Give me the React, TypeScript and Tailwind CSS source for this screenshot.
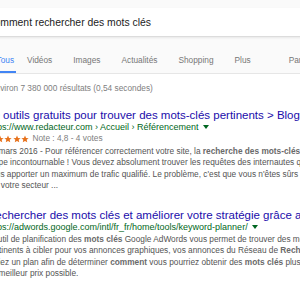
import React from 'react';

const tabs = ['Vidéos', 'Images', 'Actualités', 'Shopping', 'Plus'];

function Star() {
  return (
    <svg width="8" height="8" viewBox="0 0 24 24" className="shrink-0">
      <path
        d="M12 1.5l3.1 7.2 7.8.7-5.9 5.1 1.8 7.6L12 18l-6.8 4.1 1.8-7.6L1.1 9.4l7.8-.7z"
        fill="#e7711b"
      />
    </svg>
  );
}

function Arrow() {
  return (
    <span className="inline-block ml-[4px] mb-[1px] align-middle w-0 h-0 border-l-[3px] border-r-[3px] border-t-[4px] border-l-transparent border-r-transparent border-t-[#006621]" />
  );
}

export default function App() {
  return (
    <div className="w-[300px] h-[300px] overflow-hidden bg-white font-['Liberation_Sans',Arial,sans-serif]">
      <div className="-ml-[13px] w-[340px]">
        {/* header */}
        <div className="h-[74px] bg-[#fafafa] border-b border-[#e6e6e6] pt-[8px]">
          <div className="h-[29px] bg-white border-b border-[#dcdcdc] shadow-[0_1px_2px_rgba(0,0,0,0.08)] text-[10.4px] leading-[29px] text-[#222] whitespace-nowrap">
            Comment rechercher des mots clés
          </div>
          <div className="flex h-[36px] text-[8.3px] text-[#777] whitespace-nowrap">
            <div className="ml-[9.5px] pr-[2px] pt-[18px] border-b-[2px] border-[#4285f4] text-[#4285f4] leading-[10px]">
              Tous
            </div>
            {tabs.map((t, i) => (
              <div
                key={t}
                className={`pt-[18px] leading-[10px] ${i === 0 ? 'ml-[11px]' : 'ml-[21px]'}`}
              >
                {t}
              </div>
            ))}
            <div className="ml-[38px] pt-[18px] leading-[10px]">Paramètres</div>
          </div>
        </div>

        {/* stats */}
        <div className="mt-[9px] pl-[3px] text-[8.3px] leading-[11.6px] text-[#808080] whitespace-nowrap">
          Environ 7 380 000 résultats (0,54 secondes)
        </div>

        {/* result 1 */}
        <div className="mt-[13px] whitespace-nowrap">
          <div className="text-[11.5px] leading-[14px] text-[#1a0dab]">
            10 outils gratuits pour trouver des mots-clés pertinents &gt; Blog Rédacteur
          </div>
          <div className="mt-[0.5px] text-[9px] leading-[11px] text-[#006621]">
            https://www.redacteur.com › Accueil › Référencement
            <Arrow />
          </div>
          <div className="flex items-center gap-[0.5px] h-[11px] text-[8.3px] text-[#808080]">
            <Star />
            <Star />
            <Star />
            <Star />
            <Star />
            <span className="ml-[3px]">Note : 4,8 - 4 votes</span>
          </div>
          <div className="mt-[1.5px] text-[8.3px] leading-[11.5px] text-[#545454]">
            <div>
              17 mars 2016 - Pour référencer correctement votre site, la{' '}
              <b className="text-[#6a6a6a]">recherche des mots-clés</b> est une éta
            </div>
            <div>étape incontournable ! Vous devez absolument trouver les requêtes des internautes qui</div>
            <div>vous apporter un maximum de trafic qualifié. Le problème, c'est que vous n'êtes sûrs</div>
            <div>sur votre secteur ...</div>
          </div>
        </div>

        {/* result 2 */}
        <div className="mt-[16px] whitespace-nowrap">
          <div className="text-[11.5px] leading-[14px] text-[#1a0dab]">
            Rechercher des mots clés et améliorer votre stratégie grâce au Planificateur
          </div>
          <div className="mt-[0.5px] text-[9px] leading-[11px] text-[#006621]">
            https://adwords.google.com/intl/fr_fr/home/tools/keyword-planner/
            <Arrow />
          </div>
          <div className="mt-[0.75px] text-[8.3px] leading-[11.5px] text-[#545454]">
            <div>
              L'outil de planification des <b className="text-[#6a6a6a]">mots clés</b> Google AdWords vous permet de trouver des mots
            </div>
            <div>
              pertinents à cibler pour vos annonces graphiques, vos annonces du Réseau de{' '}
              <b className="text-[#6a6a6a]">Recherche</b>
            </div>
            <div>
              créiez un plan afin de déterminer <b className="text-[#6a6a6a]">comment</b> vous pourriez obtenir des{' '}
              <b className="text-[#6a6a6a]">mots clés</b> plus
            </div>
            <div>au meilleur prix possible.</div>
          </div>
        </div>

        {/* result 3 */}
        <div className="mt-[19px] whitespace-nowrap text-[11.5px] leading-[14px] text-[#1a0dab]">
          Comment trouver des mots-clés pertinents pour le SEO ? - Outils
        </div>
      </div>
    </div>
  );
}
